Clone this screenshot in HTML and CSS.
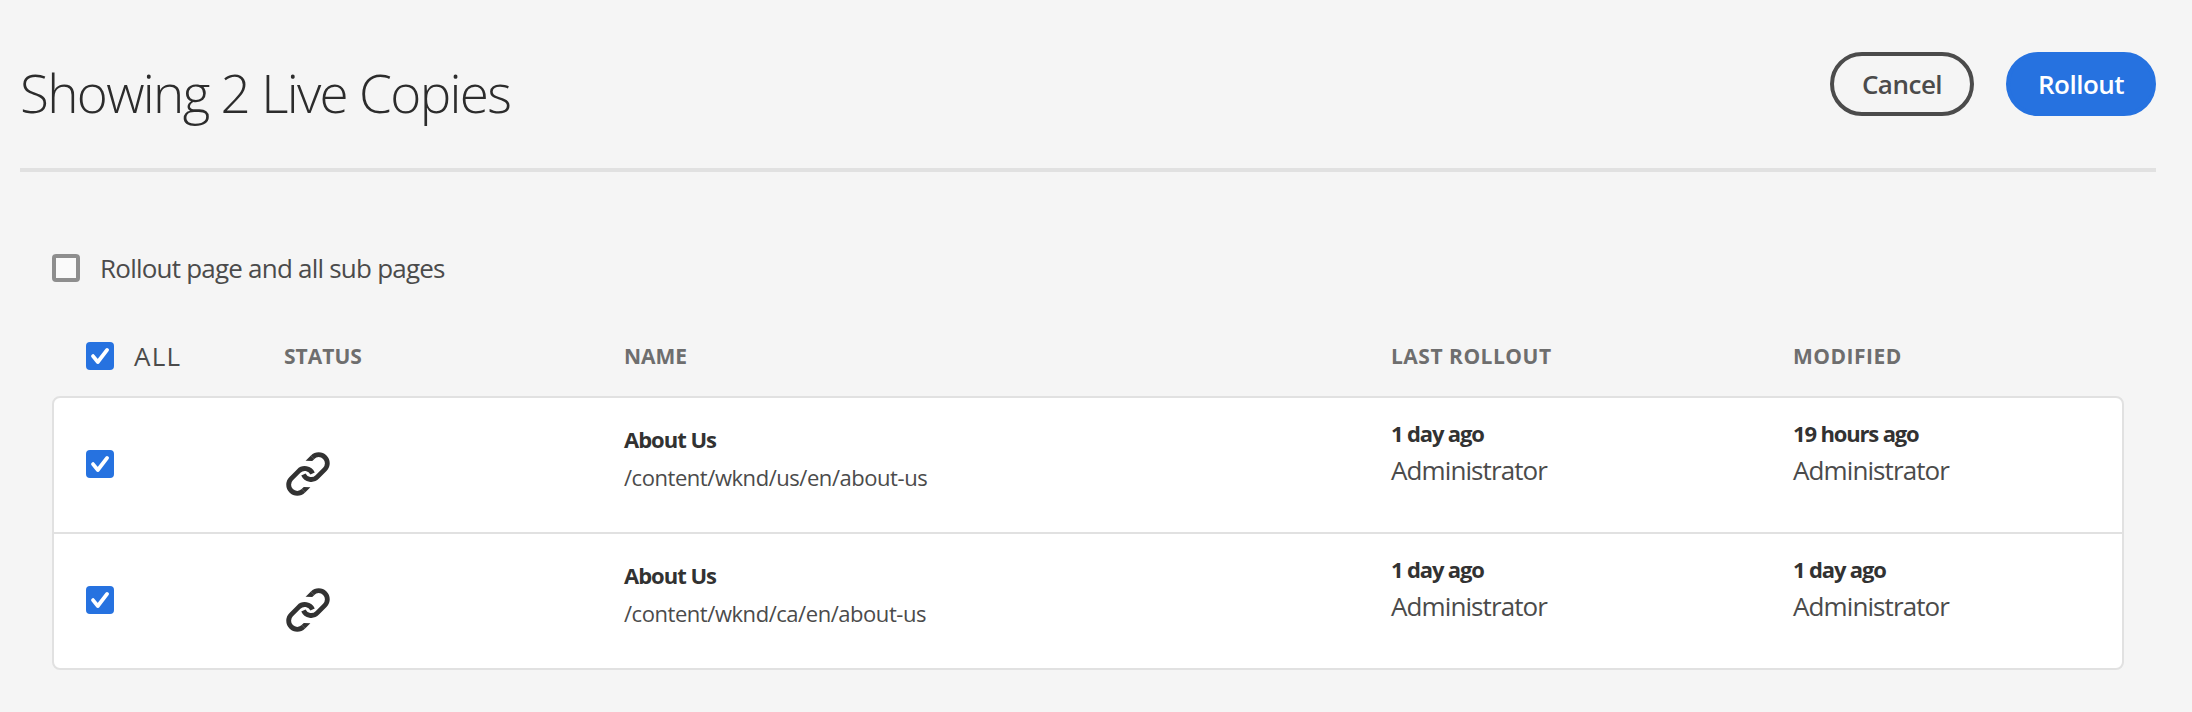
FILE: index.html
```
<!DOCTYPE html>
<html lang="en">
<head>
<meta charset="utf-8">
<title>Rollout</title>
<link rel="stylesheet" href="styles.css">
</head>
<body>
<svg class="sprite" aria-hidden="true">
  <symbol id="check" viewBox="0 0 28 28">
    <path d="M7 14.1L11.8 20L21.1 7.9" fill="none" stroke="#fff" stroke-width="3.8" stroke-linecap="round" stroke-linejoin="round"/>
  </symbol>
  <symbol id="link" viewBox="0 0 44 44">
    <g id="link-half">
      <path d="M26.6 5.2A8.6 8.6 0 0 1 38.8 17.4L31.3 24.9A8.6 8.6 0 0 1 17.4 22.5" fill="none" stroke="#323232" stroke-width="4.8"/>
      <path d="M24.9 3.5L28.4 7L26.2 9L19.6 8.8Z" fill="#323232"/>
    </g>
    <use href="#link-half" transform="rotate(180 22 22)"/>
  </symbol>
</svg>

<header class="header">
  <h1 class="title">Showing 2 Live Copies</h1>
  <div class="actions">
    <button class="button button-quiet">Cancel</button>
    <button class="button button-primary">Rollout</button>
  </div>
</header>

<main class="content">
  <div class="option">
    <span class="checkbox"></span>
    <span class="option-label">Rollout page and all sub pages</span>
  </div>

  <div class="grid head">
    <div class="select-all">
      <span class="checkbox checked"><svg><use href="#check"/></svg></span>
      <span class="all-label">ALL</span>
    </div>
    <div class="column">STATUS</div>
    <div class="column">NAME</div>
    <div class="column column-date">LAST ROLLOUT</div>
    <div class="column column-date">MODIFIED</div>
  </div>

  <div class="table">
    <div class="grid row">
      <span class="checkbox checked"><svg><use href="#check"/></svg></span>
      <svg class="link"><use href="#link"/></svg>
      <div class="page">
        <div class="strong">About Us</div>
        <div class="path">/content/wknd/us/en/about-us</div>
      </div>
      <div class="event">
        <div class="strong">1 day ago</div>
        <div class="user">Administrator</div>
      </div>
      <div class="event">
        <div class="strong">19 hours ago</div>
        <div class="user">Administrator</div>
      </div>
    </div>
    <div class="grid row">
      <span class="checkbox checked"><svg><use href="#check"/></svg></span>
      <svg class="link"><use href="#link"/></svg>
      <div class="page">
        <div class="strong">About Us</div>
        <div class="path">/content/wknd/ca/en/about-us</div>
      </div>
      <div class="event">
        <div class="strong">1 day ago</div>
        <div class="user">Administrator</div>
      </div>
      <div class="event">
        <div class="strong">1 day ago</div>
        <div class="user">Administrator</div>
      </div>
    </div>
  </div>
</main>
</body>
</html>
```
FILE: styles.css
```
* {
  box-sizing: border-box;
}

body {
  margin: 0;
  min-height: 712px;
  background: #f5f5f5;
  color: #4b4b4b;
  font-family: "Open Sans", "Liberation Sans", sans-serif;
  white-space: nowrap;
}

.sprite {
  display: none;
}

.header {
  display: flex;
  justify-content: space-between;
  align-items: flex-start;
  height: 172px;
  margin: 0 36px 0 20px;
  border-bottom: 4px solid #e1e1e1;
}

.title {
  margin: 0;
  padding-top: 57px;
  color: #2c2c2c;
  font-size: 53px;
  font-weight: 300;
  line-height: 72px;
  letter-spacing: -1.7px;
}

.actions {
  display: flex;
  gap: 32px;
  padding-top: 52px;
}

.button {
  height: 64px;
  padding: 0;
  border: 4px solid #4b4b4b;
  border-radius: 32px;
  background: transparent;
  color: #4b4b4b;
  font-family: inherit;
  font-size: 26px;
  font-weight: 600;
  line-height: 56px;
  letter-spacing: -0.5px;
}

.button-quiet {
  width: 144px;
}

.button-primary {
  width: 150px;
  border-color: #2672e0;
  background: #2672e0;
  color: #fff;
}

.content {
  padding: 72px 68px 0 52px;
}

.option {
  display: flex;
  align-items: center;
  gap: 20px;
  height: 48px;
}

.option-label {
  font-size: 26px;
  letter-spacing: -0.78px;
}

.checkbox {
  display: block;
  width: 28px;
  height: 28px;
  border: 4px solid #8e8e8e;
  border-radius: 4px;
  background: #fafafa;
}

.checked {
  border: 0;
  background: #2672e0;
}

.checked svg {
  display: block;
  width: 28px;
  height: 28px;
}

.grid {
  display: grid;
  grid-template-columns: 198px 340px 767px 402px 1fr;
}

.head {
  align-items: center;
  height: 80px;
  margin-top: 24px;
  padding-left: 34px;
}

.select-all {
  display: flex;
  align-items: center;
  gap: 20px;
}

.all-label {
  font-size: 26px;
  letter-spacing: 1.3px;
}

.column {
  color: #6e6e6e;
  font-size: 21px;
  font-weight: 700;
}

.column-date {
  letter-spacing: 0.5px;
}

.table {
  border: 2px solid #e1e1e1;
  border-radius: 8px;
  background: #fff;
}

.row {
  height: 134px;
  padding-left: 32px;
}

.row + .row {
  height: 136px;
  border-top: 2px solid #e1e1e1;
}

.row .checkbox {
  margin-top: 52px;
}

.link {
  width: 44px;
  height: 44px;
  margin: 54px 0 0 2px;
}

.page {
  padding-top: 22px;
}

.event {
  padding-top: 18px;
}

.strong {
  color: #323232;
  font-size: 22px;
  font-weight: 700;
  line-height: 35px;
  letter-spacing: -1.15px;
}

.page .strong,
.path {
  line-height: 38px;
}

.page .strong {
  letter-spacing: -1px;
}

.path {
  font-size: 22px;
  letter-spacing: -0.45px;
}

.user {
  font-size: 26px;
  line-height: 38px;
  letter-spacing: -0.9px;
}
```
